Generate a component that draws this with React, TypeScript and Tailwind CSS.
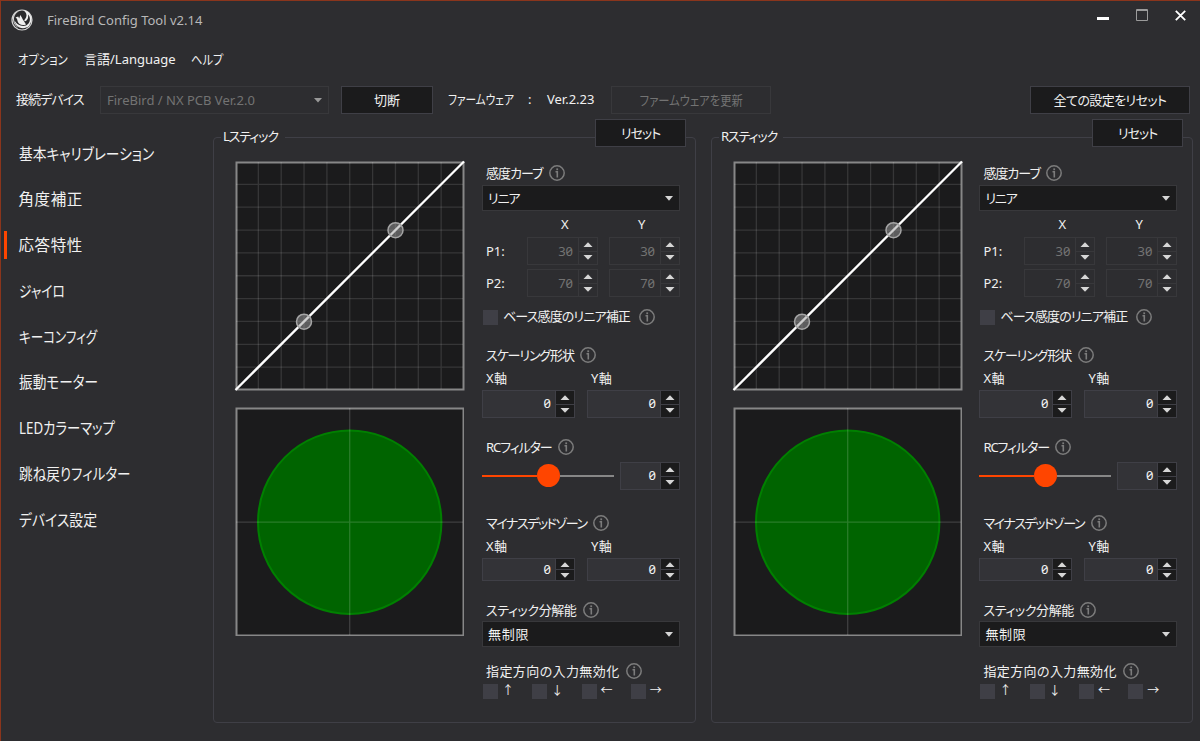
import React from "react";

const navItems = [
  { label: "基本キャリブレーション", cls: "scale-x-[0.885]" },
  { label: "角度補正", cls: "tracking-[0.6px]" },
  { label: "応答特性", cls: "tracking-[0.6px]", active: true },
  { label: "ジャイロ", cls: "scale-x-[0.82]" },
  { label: "キーコンフィグ", cls: "scale-x-[0.81]" },
  { label: "振動モーター", cls: "scale-x-[0.88]" },
  { label: "LEDカラーマップ", cls: "scale-x-[0.86]" },
  { label: "跳ね戻りフィルター", cls: "scale-x-[0.875]" },
  { label: "デバイス設定", cls: "scale-x-[0.895]" },
];

const gridLines = [1, 2, 3, 4, 5, 6, 7, 8, 9];

function Logo() {
  return (
    <svg width="22" height="22" viewBox="0 0 22 22" className="shrink-0">
      <circle cx="11" cy="11" r="10" fill="#2a2a2c" stroke="#d4d4d4" strokeWidth="1.2" />
      <path
        d="M12.500 1.500C15 3 16.200 5.500 15.200 8C14.800 9.500 13.500 10.500 13.300 11.500C13.300 12.500 14.500 12.300 15.500 11.500C17 10 17.500 8 17 5.500C19.500 8 19.500 12 17.500 14.500C15.500 17 12.500 17.500 9.500 16.500C7 15.800 5 14 3.500 11.500C3.800 14.500 5.500 17 8.500 18.500C12 20 15.500 19 18 17L20.500 12C21 6.500 18 2 12.500 1.500Z"
        fill="#efefef"
      />
      <path d="M4.500 8.500L7.200 7.500L8.200 9.500L9.300 6C10.800 8 11.200 9.800 12.500 11.500L15 15.500C11 17 7.500 15.500 6.500 12C6.400 10.500 6 9.500 4.500 8.500Z" fill="#efefef" />
      <path d="M2 8C2.500 5 5 2.500 8.500 2C5.500 3.500 3.500 5.500 3 9C2.800 12 3.800 15.500 7.500 18.800C3.500 17 1.500 12.500 2 8Z" fill="#d4d4d4" />
    </svg>
  );
}

function Info() {
  return (
    <svg width="16" height="16" viewBox="0 0 16 16" className="shrink-0" fill="none" stroke="#7c7c7c">
      <circle cx="8" cy="8" r="7.2" strokeWidth="1.5" />
      <path d="M6.500 6.800H8.300V12.500" strokeWidth="1.600" />
      <path d="M7.300 4.300H9.100" strokeWidth="1.800" />
    </svg>
  );
}

function Label({ text, cls = "" }: { text: string; cls?: string }) {
  return (
    <div className="flex h-[22px] items-center gap-[6.5px] pl-1">
      <span className={cls}>{text}</span>
      <Info />
    </div>
  );
}

function Select({ text, cls = "" }: { text: string; cls?: string }) {
  return (
    <div className="flex h-[26px] items-center justify-between border border-[#38383b] bg-[#1b1b1c] pr-1.5 pl-[5px]">
      <span className={cls}>{text}</span>
      <svg width="8" height="5" viewBox="0 0 8 5">
        <path d="M0 0H8L4 4.700Z" fill="#d6d6d6" />
      </svg>
    </div>
  );
}

function Spinner({ value, disabled = false, cls }: { value: number; disabled?: boolean; cls: string }) {
  return (
    <div className={`flex border ${disabled ? "border-[#38383b]" : "border-[#3f3f46] bg-[#333337]"} ${cls}`}>
      <span className={`flex flex-1 items-center justify-end slashed-zero ${disabled ? "pr-[5px] text-[#737373]" : "pr-[4px] pb-px text-[#f1f1f1]"}`}>
        {value}
      </span>
      <div className={`flex w-[19px] flex-col border-l ${disabled ? "border-[#38383b]" : "border-[#3f3f46] bg-[#1b1b1c]"}`}>
        <div className={`flex flex-1 items-center justify-center border-b ${disabled ? "border-[#38383b]" : "border-[#3f3f46]"}`}>
          <svg width="10" height="5" viewBox="0 0 10 5">
            <path d="M0.500 5H9.500L5 0.300Z" fill="#d6d6d6" />
          </svg>
        </div>
        <div className="flex flex-1 items-center justify-center">
          <svg width="10" height="5" viewBox="0 0 10 5">
            <path d="M0.500 0H9.500L5 4.700Z" fill="#d6d6d6" />
          </svg>
        </div>
      </div>
    </div>
  );
}

function AxisLabels() {
  return (
    <div className="flex h-[24px] items-center pl-1">
      <span className="w-[105px] tracking-[0.4px]">X軸</span>
      <span className="tracking-[0.4px]">Y軸</span>
    </div>
  );
}

function Checkbox() {
  return <div className="h-[15px] w-[15px] shrink-0 bg-[#3f3f46]" />;
}

function CurveChart() {
  return (
    <svg width="229" height="229" viewBox="0 0 229 229" className="block overflow-visible">
      <rect x="1.500" y="1.500" width="227" height="227" fill="#1b1b1c" stroke="#878787" strokeWidth="2" />
      {gridLines.map((i) => (
        <path
          key={i}
          d={`M${0.5 + i * 22.85} 1V228M1 ${0.5 + i * 22.85}H228`}
          stroke="#ffffff"
          strokeOpacity="0.12"
          strokeWidth="1.300"
        />
      ))}
      <path d="M0.500 229L229 0.500" stroke="#ffffff" strokeWidth="2.300" />
      <circle cx="69" cy="160.700" r="7.500" fill="#a0a0a0" fillOpacity="0.5" stroke="#a5a5a5" strokeWidth="1.500" />
      <circle cx="160.500" cy="69.200" r="7.500" fill="#a0a0a0" fillOpacity="0.5" stroke="#a5a5a5" strokeWidth="1.500" />
    </svg>
  );
}

function RangeChart() {
  return (
    <svg width="229" height="229" viewBox="0 0 229 229" className="block">
      <rect x="1.500" y="1.500" width="227" height="227" fill="#1b1b1c" stroke="#878787" strokeWidth="2" />
      <circle cx="114.700" cy="115.200" r="91.700" fill="#006400" stroke="#008000" strokeWidth="2" />
      <path d="M114.700 1V228M1 115.200H228" stroke="#ffffff" strokeOpacity="0.16" strokeWidth="1.300" />
    </svg>
  );
}

function StickPanel({ title, cls, gap }: { title: string; cls: string; gap: string }) {
  return (
    <section className={`relative h-[586px] rounded border border-[#3f3f46] ${cls}`}>
      <div className="absolute -top-[12px] left-[7px] flex h-[21px] w-[64px] items-center bg-[#2d2d30] pl-[2px] tracking-[-1.1px]">
        {title}
      </div>
      <button className="absolute -top-[19px] right-[9px] h-[28px] w-[91px] border border-[#3f3f46] bg-[#1b1b1c] tracking-[-1px]">
        リセット
      </button>
      <div className={`flex pt-[23px] pl-[21px] ${gap}`}>
        <div className="flex flex-col gap-[17px]">
          <CurveChart />
          <RangeChart />
        </div>
        <div className="flex w-[198px] flex-col">
          <div className="h-px" />
          <Label text="感度カーブ" cls="tracking-[-1px]" />
          <div className="h-px" />
          <Select text="リニア" cls="tracking-[-1.1px]" />
          <div className="flex h-[26px] items-center">
            <span className="ml-[79px] w-[77px]">X</span>
            <span>Y</span>
          </div>
          <div className="flex flex-col gap-1">
            <div className="flex items-center pl-1">
              <span className="w-[41px]">P1:</span>
              <Spinner value={30} disabled cls="mr-[11px] h-[28px] w-[71px]" />
              <Spinner value={30} disabled cls="h-[28px] w-[71px]" />
            </div>
            <div className="flex items-center pl-1">
              <span className="w-[41px]">P2:</span>
              <Spinner value={70} disabled cls="mr-[11px] h-[28px] w-[71px]" />
              <Spinner value={70} disabled cls="h-[28px] w-[71px]" />
            </div>
          </div>
          <div className="flex h-[40px] items-center pl-px">
            <Checkbox />
            <span className="mr-[9px] mb-px ml-[5px] tracking-[-0.85px]">ベース感度のリニア補正</span>
            <Info />
          </div>
          <div className="h-[7px]" />
          <Label text="スケーリング形状" cls="tracking-[-1.1px]" />
          <AxisLabels />
          <div className="flex justify-between">
            <Spinner value={0} cls="h-[28px] w-[93px]" />
            <Spinner value={0} cls="h-[28px] w-[93px]" />
          </div>
          <div className="h-[18px]" />
          <Label text="RCフィルター" cls="tracking-[-1.1px]" />
          <div className="mt-1 flex h-[28px] items-center justify-between">
            <div className="mb-px flex w-[132px] items-center">
              <div className="h-[2px] w-[54.5px] bg-[#ff4500]" />
              <div className="h-[23px] w-[23px] rounded-full bg-[#ff4500]" />
              <div className="h-[2px] flex-1 bg-[#878787]" />
            </div>
            <Spinner value={0} cls="h-[28px] w-[60px]" />
          </div>
          <div className="h-[22px]" />
          <Label text="マイナスデッドゾーン" cls="tracking-[-1.45px]" />
          <AxisLabels />
          <div className="flex justify-between">
            <Spinner value={0} cls="h-[23px] w-[93px]" />
            <Spinner value={0} cls="h-[23px] w-[93px]" />
          </div>
          <div className="h-[18px]" />
          <Label text="スティック分解能" cls="tracking-[-0.4px]" />
          <Select text="無制限" cls="tracking-[0.7px]" />
          <div className="h-[13px]" />
          <Label text="指定方向の入力無効化" cls="tracking-[0.4px]" />
          <div className="flex h-[18px] items-center pl-px">
            {["↑", "↓", "←", "→"].map((arrow) => (
              <div key={arrow} className="flex w-[49.500px] items-center gap-[4px]">
                <Checkbox />
                <span className="text-[12px]">{arrow}</span>
              </div>
            ))}
          </div>
        </div>
      </div>
    </section>
  );
}

export default function App() {
  return (
    <div className="flex h-[741px] w-[1200px] flex-col overflow-hidden border-t border-l border-[#8a351c] bg-[#2d2d30] font-['Noto_Sans','Noto_Sans_CJK_JP',sans-serif] text-[13px] leading-none whitespace-nowrap text-[#f1f1f1] [font-feature-settings:'palt']">
      <header className="flex h-[38px] items-center pl-[10px]">
        <Logo />
        <span className="ml-[14px] text-[#b8b8b8]">FireBird Config Tool v2.14</span>
        <div className="mr-[14px] mb-[10px] ml-auto flex items-center gap-[27px]">
          <svg width="12" height="12" viewBox="0 0 12 12">
            <path d="M0 9.500H12" stroke="#ffffff" strokeWidth="3" />
          </svg>
          <svg width="12" height="12" viewBox="0 0 12 12">
            <path d="M0.500 0.500H11.500V11.500H0.500Z M0.500 1.500H11.500" stroke="#9b9b9b" fill="none" />
          </svg>
          <svg width="11" height="11" viewBox="0 0 11 11">
            <path d="M0.800 0.800L10.200 10.200M10.200 0.800L0.800 10.200" stroke="#ffffff" strokeWidth="1.800" />
          </svg>
        </div>
      </header>

      <nav className="flex h-[40px] items-center pl-[17px]">
        <span className="w-[66px] origin-left scale-x-[0.87]">オプション</span>
        <span className="mr-[15px]">言語/Language</span>
        <span className="origin-left scale-x-[0.87]">ヘルプ</span>
      </nav>

      <div className="mt-[7px] flex h-[28px] items-center pl-[15px]">
        <span className="mb-[2px] w-[84px] tracking-[-0.9px]">接続デバイス</span>
        <div className="flex h-[28px] w-[229px] items-center justify-between border border-[#38383b] pr-1.5 pl-1.5 text-[#737373]">
          <span>FireBird / NX PCB Ver.2.0</span>
          <svg width="8" height="5" viewBox="0 0 8 5">
            <path d="M0 0H8L4 4.500Z" fill="#999999" />
          </svg>
        </div>
        <button className="ml-[12px] h-[28px] w-[92px] border border-[#3f3f46] bg-[#1b1b1c]">切断</button>
        <span className="mb-[2px] ml-[15px] w-[80px] origin-left scale-x-[0.82]">ファームウェア</span>
        <span className="mb-[2px] w-[19px]">:</span>
        <span className="mb-[2px] w-[64px]">Ver.2.23</span>
        <button className="flex h-[28px] w-[160px] items-center justify-center border border-[#38383b] text-[#737373]">
          <span className="scale-x-[0.87]">ファームウェアを更新</span>
        </button>
        <button className="mr-[10px] ml-auto h-[28px] w-[160px] border border-[#3f3f46] bg-[#1b1b1c] tracking-[-0.6px]">
          全ての設定をリセット
        </button>
      </div>

      <main className="flex flex-1">
        <aside className="flex w-[212px] shrink-0 flex-col pt-[17px] text-[15.5px]">
          {navItems.map((item) => (
            <div key={item.label} className="flex h-[45.75px] items-center pl-[3px]">
              <div className={`mr-[11.5px] h-[28px] w-[3px] ${item.active ? "bg-[#ff4500]" : ""}`} />
              <span className={`origin-left pt-px ${item.cls}`}>{item.label}</span>
            </div>
          ))}
        </aside>
        <div className="flex gap-[15px] pt-[23px]">
          <StickPanel title="Lスティック" cls="w-[483px]" gap="gap-[18px]" />
          <StickPanel title="Rスティック" cls="w-[482px]" gap="gap-[17.4px]" />
        </div>
      </main>
    </div>
  );
}
